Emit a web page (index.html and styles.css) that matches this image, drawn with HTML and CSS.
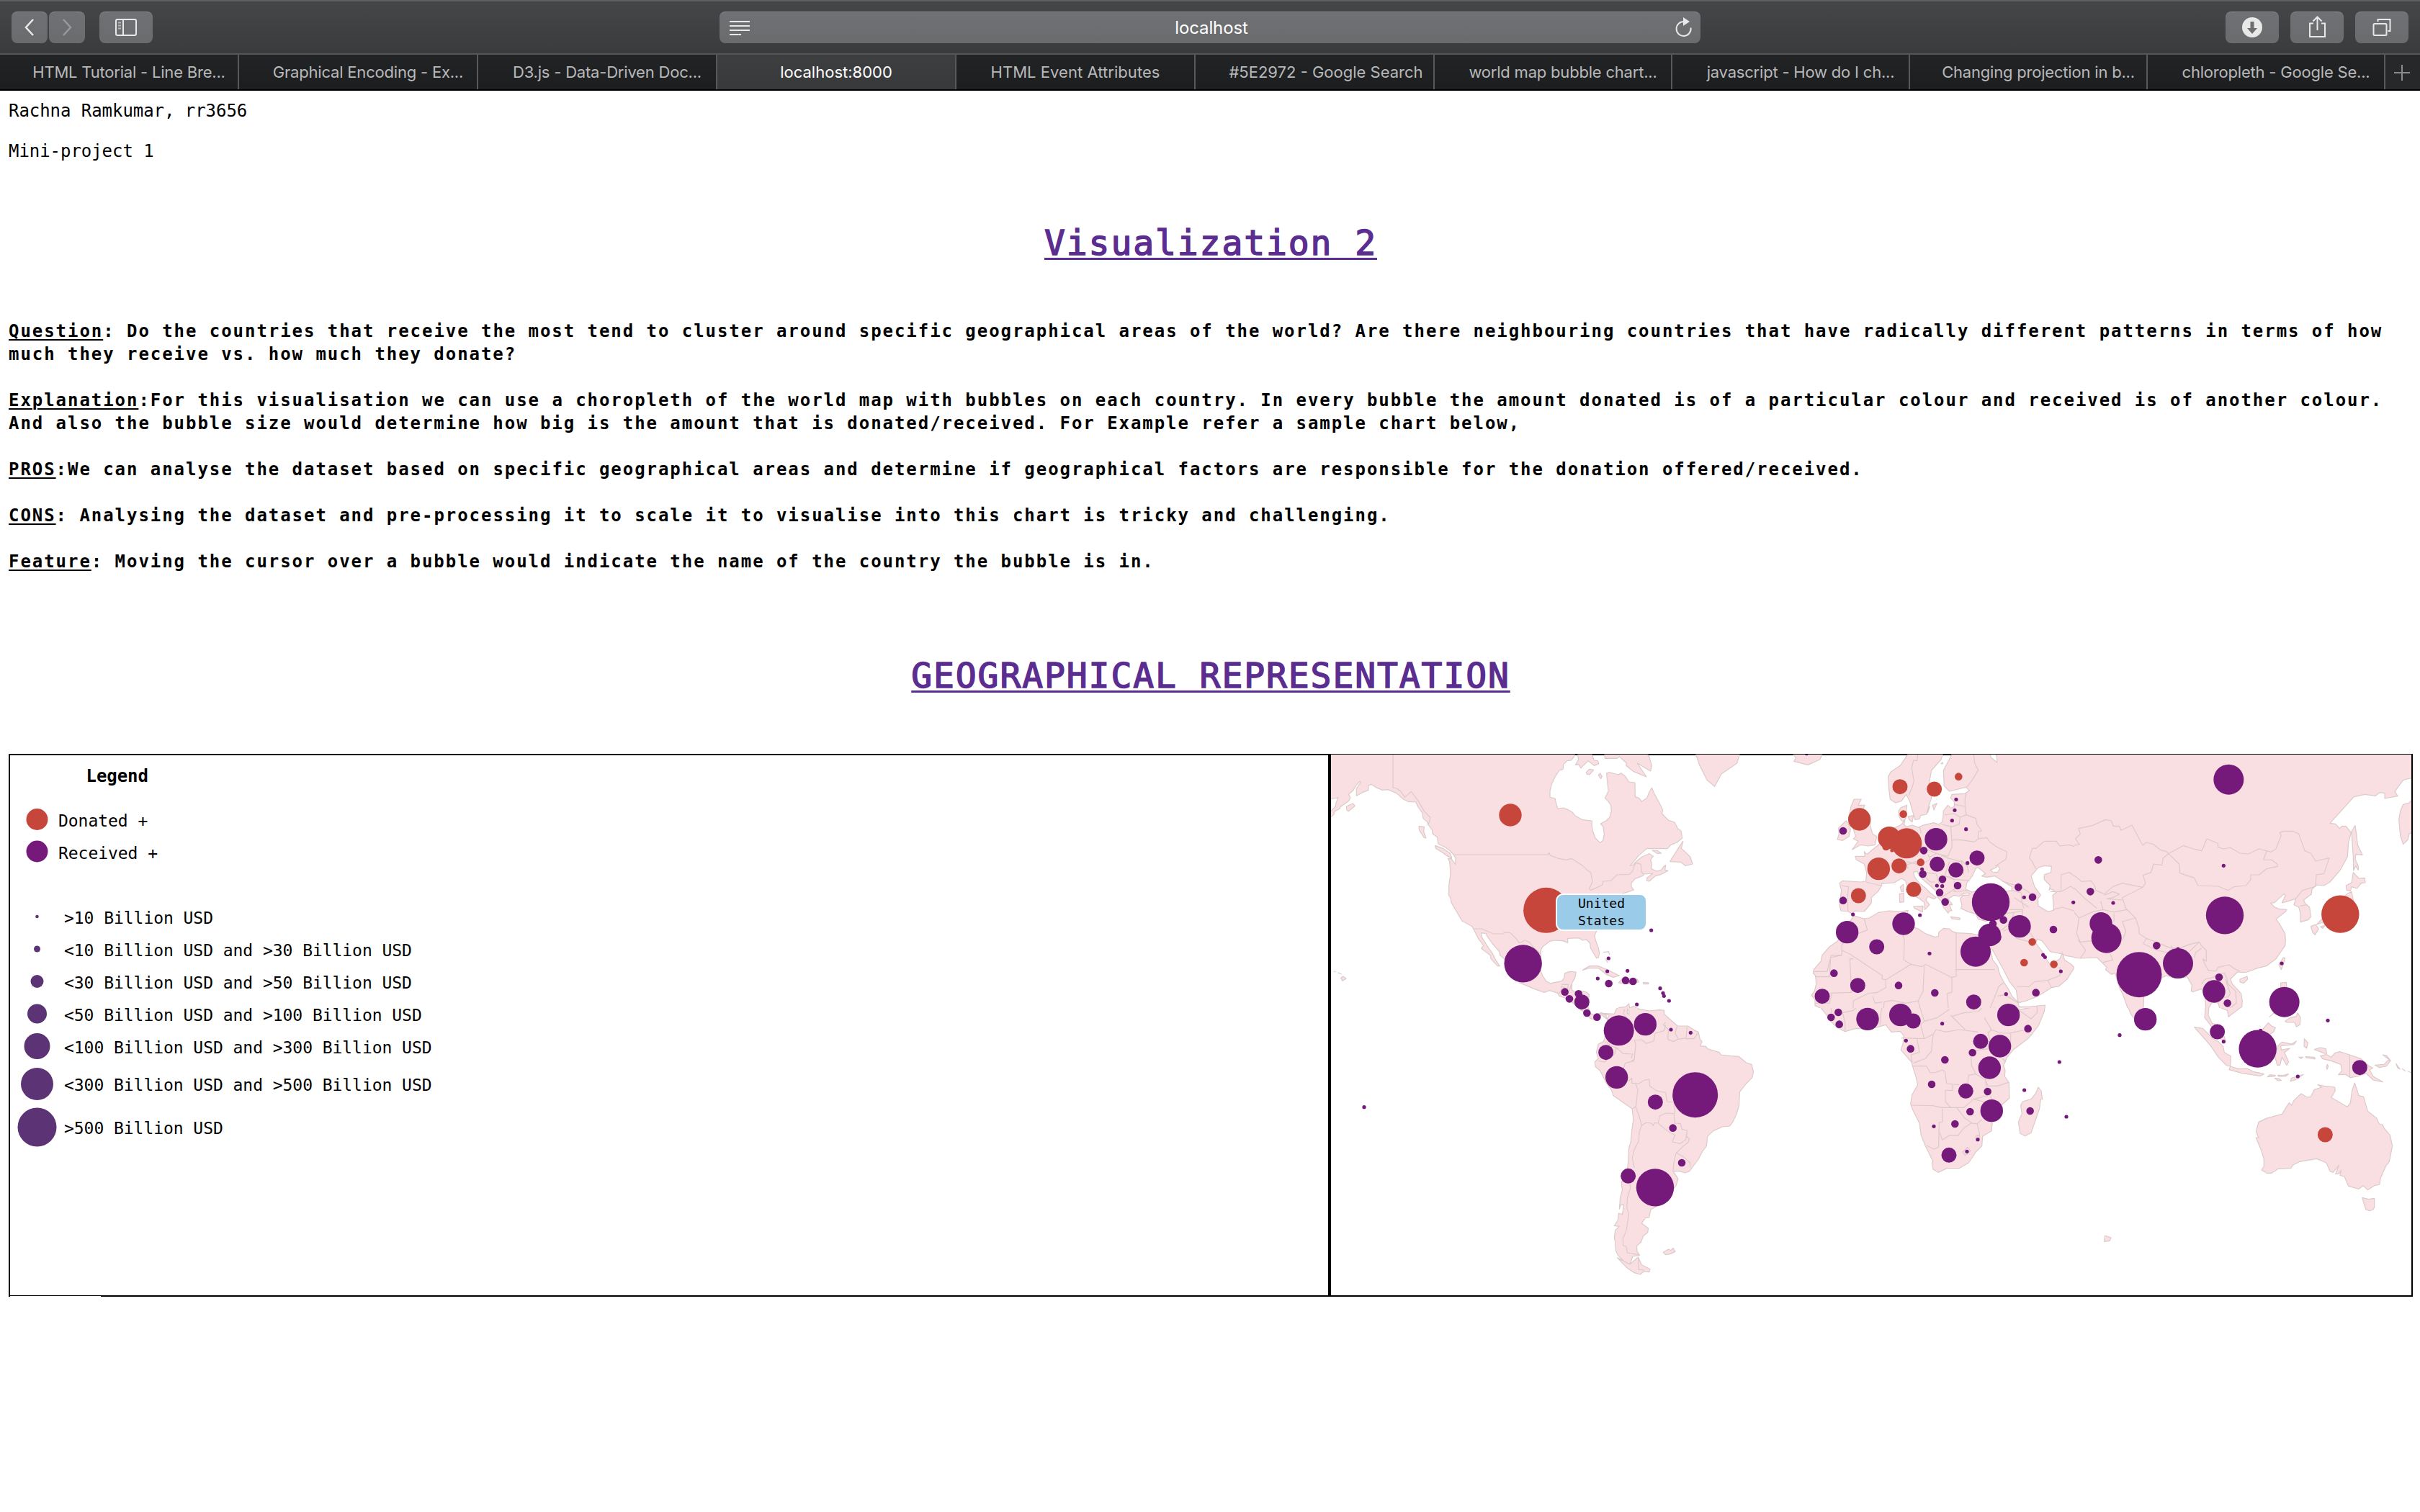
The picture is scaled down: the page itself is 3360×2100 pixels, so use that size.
FILE: index.html
```html
<!DOCTYPE html>
<html lang="en">
<head>
<meta charset="utf-8">
<title>localhost:8000</title>
<link rel="stylesheet" href="styles.css">
</head>
<body>
<header class="browser">
  <div class="toolbar">
    <div class="tools">
      <div class="pair">
        <button class="btn nav"><svg width="50" height="44" viewBox="0 0 50 44"><path d="M30 11 20 22l10 11" class="ico thick"/></svg></button>
        <button class="btn nav"><svg width="50" height="44" viewBox="0 0 50 44"><path d="M20 11 30 22 20 33" class="ico thick dim"/></svg></button>
      </div>
      <button class="btn side"><svg width="74" height="44" viewBox="0 0 74 44"><rect x="23" y="11" width="28" height="22" rx="2" class="ico"/><path d="M33 11v22" class="ico"/><path d="M26 15.5h4M26 19.500h4M26 23.500h4" class="ico dim2"/></svg></button>
    </div>
    <div class="url">
      <svg width="30" height="44" viewBox="0 0 30 44"><path d="M0 13h28M0 19h28M0 25h28M0 31h16" class="ico"/></svg>
      <span>localhost</span>
      <svg width="26" height="44" viewBox="0 0 26 44"><path d="M22.500 21.500a10 10 0 1 1-9.500-8.500" class="ico"/><path d="M12 7l9 6-9 6z" class="solid"/></svg>
    </div>
    <div class="tools right">
      <button class="btn side"><svg width="74" height="44" viewBox="0 0 74 44"><circle cx="37" cy="22" r="14" class="solid"/><path d="M34.500 14h5v9h4.500L37 31l-7-8h4.500z" class="cut"/></svg></button>
      <button class="btn side"><svg width="74" height="44" viewBox="0 0 74 44"><path d="M32 16.500h-5v18.500h21V16.500h-5" class="ico"/><path d="M37.500 26V8M31.500 13.500l6-6 6 6" class="ico"/></svg></button>
      <button class="btn side"><svg width="74" height="44" viewBox="0 0 74 44"><rect x="25.500" y="17" width="18" height="16" rx="1.500" class="ico"/><path d="M31.500 14v-3h17v16h-3" class="ico"/></svg></button>
    </div>
  </div>
  <nav class="tabs">
    <div class="tab"><span>HTML Tutorial - Line Bre...</span></div>
    <div class="tab"><span>Graphical Encoding - Ex...</span></div>
    <div class="tab"><span>D3.js - Data-Driven Doc...</span></div>
    <div class="tab active"><span>localhost:8000</span></div>
    <div class="tab short"><span>HTML Event Attributes</span></div>
    <div class="tab loose"><span>#5E2972 - Google Search</span></div>
    <div class="tab narrow"><span>world map bubble chart...</span></div>
    <div class="tab narrow"><span>javascript - How do I ch...</span></div>
    <div class="tab narrow"><span>Changing projection in b...</span></div>
    <div class="tab narrow"><span>chloropleth - Google Se...</span></div>
    <div class="add"><svg width="24" height="24" viewBox="0 0 24 24"><path d="M12 1v22M1 12h22"/></svg></div>
  </nav>
</header>

<main class="page">
  <p class="line">Rachna Ramkumar, rr3656</p>
  <p class="line">Mini-project 1</p>
  <h1 class="title">Visualization 2</h1>
  <div class="notes">
    <p><u>Question</u>: Do the countries that receive the most tend to cluster around specific geographical areas of the world? Are there neighbouring countries that have radically different patterns in terms of how<br>much they receive vs. how much they donate?</p>
    <p><u>Explanation</u>:For this visualisation we can use a choropleth of the world map with bubbles on each country. In every bubble the amount donated is of a particular colour and received is of another colour.<br>And also the bubble size would determine how big is the amount that is donated/received. For Example refer a sample chart below,</p>
    <p><u>PROS</u>:We can analyse the dataset based on specific geographical areas and determine if geographical factors are responsible for the donation offered/received.</p>
    <p><u>CONS</u>: Analysing the dataset and pre-processing it to scale it to visualise into this chart is tricky and challenging.</p>
    <p><u>Feature</u>: Moving the cursor over a bubble would indicate the name of the country the bubble is in.</p>
  </div>
  <h2 class="title">GEOGRAPHICAL REPRESENTATION</h2>

  <div class="charts">
    <section class="legend">
      <svg width="700" height="749" viewBox="14 1049 700 749">
        <text x="119.500" y="1086" class="head">Legend</text>
        <circle cx="51.500" cy="1138" r="15" class="donated"/><text x="81" y="1148">Donated +</text>
        <circle cx="51.500" cy="1182.500" r="15" class="received"/><text x="81" y="1193">Received +</text>
        <g class="size">
          <circle cx="51.500" cy="1273" r="2.300"/><circle cx="51.500" cy="1318" r="4.500"/><circle cx="51.500" cy="1363" r="9"/><circle cx="51.500" cy="1408" r="13.500"/><circle cx="51.500" cy="1453" r="18"/><circle cx="51.500" cy="1505.500" r="22.500"/><circle cx="51.500" cy="1565.500" r="27"/>
        </g>
        <text x="89" y="1283">&gt;10 Billion USD</text>
        <text x="89" y="1328">&lt;10 Billion USD and &gt;30 Billion USD</text>
        <text x="89" y="1373">&lt;30 Billion USD and &gt;50 Billion USD</text>
        <text x="89" y="1418">&lt;50 Billion USD and &gt;100 Billion USD</text>
        <text x="89" y="1463">&lt;100 Billion USD and &gt;300 Billion USD</text>
        <text x="89" y="1515">&lt;300 Billion USD and &gt;500 Billion USD</text>
        <text x="89" y="1575">&gt;500 Billion USD</text>
      </svg>
    </section>
    <section class="map">
      <svg class="world" width="1500" height="751" viewBox="1848 1048 1500 751">
        <!-- North America -->
        <svg x="1840" y="1030" width="640" height="370" viewBox="0 0 1920 1110">
          <path class="land" d="M0 40 1045 40 1040 56 1025 78 1008 80 992 95 990 115 975 120 958 145 942 180 936 205 936 232 957 237 963 262 969 280 990 276 1012 284 1030 295 1040 308 1072 326 1111 330 1110 350 1115 375 1125 402 1145 422 1157 412 1162 385 1158 355 1147 342 1170 330 1185 315 1192 290 1190 265 1178 248 1165 235 1180 206 1175 170 1172 132 1182 128 1222 138 1232 131 1250 145 1265 168 1290 171 1291 230 1307 235 1318 250 1340 235 1350 210 1360 193 1372 220 1395 262 1406 285 1402 300 1430 328 1455 336 1468 362 1482 372 1487 402 1465 420 1440 430 1425 446 1340 445 1305 475 1285 500 1270 517 1280 515 1297 498 1320 480 1350 467 1366 478 1355 492 1360 510 1358 530 1380 540 1400 535 1410 520 1418 515 1415 535 1428 538 1400 553 1375 560 1350 582 1340 580 1340 568 1365 549 1327 552 1325 558 1290 572 1275 590 1275 605 1285 618 1262 626 1235 634 1200 660 1190 700 1160 760 1130 790 1122 808 1125 825 1138 860 1142 880 1138 900 1130 902 1118 882 1105 860 1103 840 1088 825 1072 828 1058 818 1010 820 1010 838 990 830 955 828 935 832 905 855 898 870 898 910 895 950 905 975 920 998 938 1007 958 1003 985 998 995 985 998 965 1020 958 1045 960 1040 985 1028 1005 1027 1035 1040 1042 1065 1038 1090 1045 1100 1055 1095 1080 1095 1130 1060 1130 1055 1105 1000 1068 975 1060 968 1048 935 1037 912 1045 870 1030 810 1005 780 970 760 920 745 905 728 890 725 875 695 840 675 812 670 800 650 797 652 815 680 860 695 880 710 910 727 935 718 935 690 905 688 890 650 862 660 850 640 825 617 780 612 770 570 747 545 705 525 670 522 652 515 640 515 600 522 550 518 500 512 487 525 488 543 512 543 485 535 472 520 455 500 440 470 425 467 398 448 385 445 368 428 345 425 335 408 320 405 298 385 270 378 252 345 250 325 240 297 215 262 200 238 202 210 190 192 178 180 184 180 202 155 212 130 226 130 195 148 170 145 165 130 180 115 205 97 220 105 235 95 250 65 270 60 280 40 290 35 305 0 335Z
            M457 433 490 445 520 465 527 485 505 475 485 460 460 445ZM390 353 412 355 410 375 420 402 412 400 392 370ZM88 270 115 258 124 268 97 290 90 285Z
            M1050 40 1055 75 1042 97 1055 95 1065 110 1095 80 1120 100 1140 92 1135 80 1120 78 1105 40ZM1087 128 1100 115 1118 118 1100 138 1090 136ZM1138 140 1145 132 1153 145 1148 155ZM1162 40 1165 70 1215 70 1225 62 1255 90 1253 100 1285 125 1338 147 1300 90 1355 123 1360 100 1350 65 1335 40Z
            M1436 500 1470 445 1490 415 1483 445 1500 460 1520 480 1530 510 1500 517 1480 502ZM1539 40 1560 100 1590 160 1622 187 1650 135 1715 90 1730 40Z
            M1362 453 1385 455 1400 465 1385 467ZM1072 952 1100 935 1135 935 1175 950 1225 975 1200 982 1170 970 1140 945 1100 943ZM1240 985 1300 990 1305 1002 1270 1010 1222 1005ZM1325 1003 1348 1005 1345 1010 1325 1010ZM65 985 75 978 87 988 72 997Z
            M1140 1150 1200 1125 1225 1108 1252 1105 1265 1092 1268 1110 1285 1102 1310 1118 1410 1115 1410 1150Z"/>
          <path class="sea" d="M0 250 24 240 53 233 45 255 43 270 24 290 0 300Z"/>
          <path class="border" d="M282 54V192L298 195 315 208 332 232 358 208 388 248 412 290 437 315 435 330 428 345M535 471H928L932 462 937 474 972 487 1005 493 1025 487 1070 515 1088 533 1107 547 1113 585 1100 612 1105 620 1155 597 1157 582 1190 580 1215 555 1265 553 1280 540 1290 510 1297 505 1315 512 1317 543 1327 552M617 780 652 780 700 801H743L745 795 770 796 795 820 805 835 815 838 830 828 850 835 865 855 898 885M972 1050 985 1035 983 1020 1010 1030 1012 1012H985M1027 1010 1015 1040M1158 878 1180 875 1185 888M1168 905 1176 922M35 957 45 960M52 962 68 970"/>
        </svg>
        <!-- South America -->
        <svg x="1840" y="1400" width="640" height="400" viewBox="0 0 1543.900 1200" preserveAspectRatio="none">
          <path class="land" d="M945 50 940 30 925 22 968 25 975 5 990 -15 1045 -15 1050 5 1085 12 1120 8 1135 10 1135 25 1150 42 1180 75 1215 75 1240 95 1250 100 1255 130 1262 140 1255 158 1275 160 1280 170 1320 185 1325 195 1360 200 1385 202 1410 228 1428 235 1434 265 1430 290 1410 315 1388 350 1386 405 1378 440 1365 475 1355 492 1330 495 1300 512 1280 535 1277 575 1262 600 1250 630 1232 660 1220 680 1205 687 1185 680 1165 680 1182 712 1175 740 1150 780 1120 820 1090 840 1085 873 1072 875 1060 897 1082 918 1080 935 1065 950 1058 975 1043 992 1045 1015 1053 1030 1030 1035 1020 1068 1000 1055 980 1030 973 1010 972 980 968 955 972 925 985 910 968 907 980 885 983 855 995 860 1000 820 990 820 985 838 988 790 995 760 992 725 1010 690 1015 640 1017 585 1023 560 1028 500 1032 465 1028 420 1005 400 965 365 958 340 940 310 920 260 905 245 903 225 915 210 908 185 915 150 932 140 938 120 945 90Z
            M978 1040 1020 1068 1048 1038 1060 1070 1088 1088 1085 1100 1067 1098 1055 1110 1035 1103 1010 1082ZM1132 1018 1150 1005 1158 1010 1165 1000 1172 1015 1155 1025 1140 1028ZM845 -20 850 3 870 20 890 45 910 52 925 28 945 48 950 30 925 20 900 30 885 20 880 -20Z"/>
          <path class="sea" d="M1012 5 1018 15 1016 27 1011 22Z"/>
          <path class="border" d="M1003 5 998 25 1010 40M1035 135 1040 150 1035 215 1025 220M975 165 998 190 1030 192 1025 210M1035 220 1005 230 998 255M1013 305 1027 293V313L1050 315 1070 300 1085 297 1087 325 1110 345 1140 352 1145 390 1168 393 1172 430 1168 440 1170 480 1190 482 1195 505 1212 510 1210 535 1220 545 1215 560 1195 580 1175 605 1168 640 1165 680M1175 603 1200 620 1222 645V665M1040 315 1047 340 1043 385 1040 415 1050 445 1060 490 1052 515 1050 555 1035 590 1028 625 1035 665M1020 730 1022 750 1012 790 1010 830 1017 860 1008 930 997 960 998 990 1008 993 1012 1020 1050 1028M1028 420 1040 410M1060 490 1075 478 1093 480 1098 490 1103 478 1115 480 1120 450 1140 438 1168 440M1115 480 1145 512 1172 530 1162 558 1190 565 1208 548 1212 510M938 140 960 160 975 165 970 190 935 225 915 220M1035 135 1060 132 1075 148 1100 138 1105 105 1135 95 1140 70M1140 60 1132 70 1150 90 1147 130 1165 140 1182 130 1172 105 1178 78M1182 130 1208 125 1212 80M1208 128 1235 128 1248 105M1048 1040 1050 1090 1070 1092"/>
        </svg>
        <!-- Europe, North Africa and the Middle East -->
        <svg x="2480" y="1030" width="400" height="370" viewBox="0 0 1200 1110">
          <path class="land" d="M515 40 475 100 437 125 425 145 427 190 433 240 455 255 480 248 500 220 515 250 525 285 537 325 555 322 560 308 585 303 590 280 605 235 600 200 597 165 605 120 645 75 657 40ZM15 40 42 68 32 82 90 97 140 75 157 40Z
            M697 40 655 120 658 185 680 207 748 190 763 203 745 217 690 220 685 235 700 250 700 270 688 278 673 265 655 290 653 320 650 335 635 345 615 338 565 350 552 358 525 348 500 355 490 345 495 330 480 330 470 310 468 290 478 275 503 265 500 290 498 320 480 345 470 350 430 370 385 430 372 440 335 470 325 458 328 478 288 478 292 492 325 510 335 545 332 582 310 585 235 580 222 590 230 620 222 680 228 705 258 708 275 718 285 705 325 708 355 672 355 650 382 625 398 600 397 592 450 588 480 570 497 580 505 605 530 640 555 655 575 670 578 700 597 680 582 660 590 645 615 655 625 650 600 630 580 610 555 590 535 565 530 545 545 540 555 560 575 580 600 600 625 625 632 650 650 670 655 690 675 715 680 705 690 705 680 680 692 680 675 655 700 640 720 645 735 635 755 630 765 632 760 640 735 640 725 655 732 680 728 695 760 710 790 718 800 740 830 748 870 740 860 770 840 800 795 805 770 800 710 797 690 790 680 780 655 778 635 795 635 810 620 815 580 800 550 780 520 770 490 745 515 730 505 712 508 703 480 708 430 705 385 712 345 735 325 738 280 725 270 745 240 765 215 830 180 855 150 890 145 915 115 950 112 965 122 975 125 1010 118 1040 105 1057 120 1075 120 1100 145 1112 145 1150 1075 1150 1078 1098 1010 1105 970 1105 965 1085 940 1060 925 1030 905 1000 890 970 880 935 860 910 850 860 855 860 880 905 905 950 930 1000 958 1035 965 1080 970 1088 1000 1080 1050 1060 1105 1025 1135 1020 1170 990 1200 942 1190 930 1160 910 1150 880 1140 905 1100 930 1085 910 1070 880 1040 840 1045 822 1065 830 1085 855 1100 875 1150 885 1165 892 1225 902 1260 900 1260 40Z
            M283 240 313 240 300 265 327 265 320 285 350 320 350 350 360 385 377 395 370 430 340 435 310 430 275 450 300 415 280 405 290 395 275 350 260 320 270 270ZM250 330 258 340 268 365 262 395 235 412 213 408 220 385 218 360ZM475 605 488 595 488 625 480 625ZM472 635 490 630 490 668 473 670ZM685 730 725 735 722 742 690 738ZM530 687 570 685 568 710 535 695ZM610 265 628 257 615 285ZM590 295 595 272 598 272ZM508 312 530 308 525 335 512 325ZM645 92 651 86 652 93Z"/>
          <path class="sea" d="M748 615 752 590 775 560 790 528 800 525 830 550 815 560 835 565 870 560 900 580 940 605 940 620 900 625 870 605 800 620 775 627ZM850 535 875 525 880 515 890 530 880 545 860 543ZM1020 560 1050 525 1075 517 1105 520 1103 545 1075 555 1075 575 1100 600 1095 620 1100 612 1125 628 1110 640 1115 703 1090 708 1050 685 1048 655 1060 640 1035 605ZM850 40 852 65 878 87 878 65 868 40Z"/>
          <path class="border" d="M550 40 545 80 530 78 523 110 532 165 525 190 510 225M780 40 785 90 800 118 775 160 752 190M748 215 745 240 745 270 700 262M745 270 750 305 725 315 700 300 660 305M750 305 790 320 795 345 815 372 800 375 800 405 835 400 850 420 880 440 920 460 915 490 885 510 870 520M725 315 720 345 690 355 650 345M690 410 730 410 785 418 800 405M685 350 690 410 690 440 672 480M570 440 610 460 640 470 672 478M555 355 562 380M1260 352 1220 362 1215 405 1225 430 1200 437 1180 430 1140 435 1125 415 1075 415 1040 445 1025 445 1013 485 1025 500 1040 530M1145 625V555L1180 545 1220 575 1260 580M1100 625 1145 625 1185 603 1215 625 1260 650M1110 700 1150 690 1215 710 1218 750 1215 830 1250 900M1220 750 1260 735M1225 835 1260 832M930 700 985 700 985 730 1010 790 1040 830M900 720 985 705M900 582 960 600 1000 620 1040 650M940 620 980 630 980 660 990 695M950 650 1010 690M905 790 925 780 960 820 1030 838M890 790 930 760 950 710M960 1020 1010 1022 1035 1000 1090 995 1140 975 1140 940M1090 995 1105 1025M332 585 395 600M230 600 260 605 255 650 258 708M500 500 560 515 600 490 590 470M600 480 630 465 670 485 730 500 740 555M660 560 700 575 760 578M580 545 625 552 640 600M575 560 600 585 620 585M700 580 700 625 760 620M645 650 700 615M680 500 660 560 700 570M540 500 500 515 510 530M730 495 755 520 760 545M325 738 338 785 300 800 232 845V890H188L170 958H112M232 870 265 885 400 975V990L415 992 520 928 490 910 492 830 485 800 505 735M265 905 272 1045 185 1048M265 905H280M708 795V948M708 950H870M520 928 565 938 580 928 690 983V1045M708 948V978L690 983M575 935 570 1040 550 1080M415 992V1025L380 1045 340 1050 280 1080 278 1120M120 980H180L185 900 232 890M690 1045 670 1050 675 1110M850 1110 870 1060 885 1020 905 1005M880 1060 910 1055 968 1090M405 1130 408 1085 440 1078 500 1090 550 1080 560 1120M360 1060 370 1090 400 1085M120 1090 180 1090 190 1050M800 1120 870 1110M1045 1130 1045 1105"/>
        </svg>
        <!-- Southern Africa -->
        <svg x="2480" y="1400" width="400" height="400" viewBox="0 60 1200 1200">
          <path class="land" d="M105 8 118 25 120 50 145 60 165 85 185 115 210 140 245 158 290 145 350 148 415 130 438 160 475 157 490 175 487 205 478 235 522 285 527 305 540 345 548 380 525 420 518 460 525 480 555 540 562 590 580 635 612 700 607 705 612 732 633 745 670 728 720 728 760 705 790 660 815 635 818 595 855 572 858 540 850 480 900 462 930 435 928 370 910 345 912 320 905 300 920 265 945 235 1010 185 1050 135 1075 75 1078 47 970 67 967 40 940 15 925 -20 105 -20ZM1050 390 1062 405 1067 440 1060 440 1055 480 1020 580 995 593 975 583 967 535 982 500 977 465 985 450 1020 440 1040 415Z"/>
          <path class="border" d="M527 302H585L600 330 625 328 650 318 662 325 668 375 720 380M668 375 693 377V403H663V450L685 475M520 465 610 467 650 475 700 475 740 475 780 440 840 425M650 480V535L637 537 635 640 615 648 585 633M640 580 650 610 680 590 715 592 740 560 770 540 795 542 805 580V600M710 475 745 520 775 540M795 542 815 525M530 290 580 270 605 240 612 170 625 150 665 160 720 150 800 160M770 260 772 300 790 335 760 340 755 378M790 335 830 360 840 385 880 385 925 370M770 240 840 230M840 160 850 200M850 150 900 165 930 165 1000 150M935 165V200M900 270 915 285M1045 55V80L1020 105 970 70M480 185 575 188 610 170M575 188 560 130 575 115 555 50M685 90 745 150M575 115 630 100 680 65M690 95 740 80 800 75 830 45M825 100 855 150 840 165M390 130 395 80 405 30M245 155 245 120 235 80 280 70 300 50M145 60 185 50 190 80M735 660 755 640 768 655 745 675ZM782 440 820 450 840 480M850 425 860 445M830 360 838 425M545 190 555 245 520 255 525 290M790 600a8 10 0 1 0 16 0a8 10 0 1 0-16 0"/>
        </svg>
        <!-- Asia -->
        <svg x="2880" y="1030" width="470" height="370" viewBox="0 0 1410 1110">
          <path class="land" d="M-20 40H1430V145L1405 152 1370 160 1335 208 1347 227 1293 237 1293 215 1272 212 1255 226 1210 220 1165 230 1065 340 1088 343 1105 362 1115 352 1132 353 1153 380 1142 420 1138 480 1108 535 1065 585 1040 600 1010 597 990 615 988 635 955 660 962 675 980 690 985 730 975 742 942 752 942 715 935 690 915 680 922 655 880 668 865 672 880 640 873 635 835 670 818 673 835 690 852 697 885 700 880 708 840 740 855 760 878 800 880 830 878 850 840 905 800 935 765 943 720 960 705 962 680 960 650 990 658 1010 695 1050 700 1080 698 1105 640 1145 635 1125 605 1110 600 1090 575 1085 560 1110 560 1150 545 1150 548 1110 545 1060 530 1030 495 1042 487 1040 490 1015 470 980 420 985 385 975 350 990 290 1060 288 1110 270 1140 245 1150 235 1140 215 1090 205 1060 190 1030 170 965 155 970 130 950 135 940 95 900 25 903 -20 898Z
            M1170 350 1175 385 1180 430 1200 472 1172 470 1170 490 1183 520 1183 535 1172 518 1163 537 1162 480 1155 375ZM1162 545 1185 570 1210 568 1212 588 1195 590 1178 612 1155 605 1150 622 1135 620 1132 600 1155 588ZM1135 635 1155 625 1162 660 1160 740 1100 790 1045 750 1010 762 1035 735 1080 700ZM985 770 1005 762 1018 780 1003 805 993 795ZM1025 772 1045 765 1035 778ZM1430 225 1410 238 1395 255 1370 262 1358 290 1352 325 1358 390 1370 428 1390 408 1395 383 1430 380ZM870 900 878 902 870 930 862 950 852 930ZM690 990 720 978 722 990 705 1007 690 1002ZM860 1005 883 1003 885 1030 860 1050Z"/>
          <path class="border" d="M-10 432 22 430 5 405 25 385 18 362 75 350 130 325 155 330 162 352 188 352 195 370 240 348 285 432 300 420 330 428 360 452 385 458 392 467 370 485 365 515 330 510 320 545 287 557 297 590 285 607 200 590 160 605 125 635 90 620 85 600 70 580 30 583 -10 550M392 467 455 433 495 447 530 455 540 435 552 405 597 423 600 440 620 447 650 442 690 465 725 468 770 447 820 460 840 447 862 390 855 380 870 373 910 373 935 385 960 455 985 465 1005 498 1062 485 1040 550 1008 555 1005 605M392 467 437 510 440 548 500 568 515 600 600 603 640 620 665 605 715 600 735 575V555L770 555 800 530 847 520 845 510 822 493 788 492 802 455M285 607 240 630 200 650 215 695M125 640 160 625 188 635 160 650 135 655 200 660M110 665 120 700M-10 600 40 650 95 695M215 695 255 735 270 780V800L300 820 340 835 400 860 440 860 480 845 520 835 530 850 550 870V915L535 905 545 930 560 955 590 955M300 820 288 842 345 870 400 880M590 955 600 940 645 930 665 945 690 957M595 970 625 965 635 985 640 1010 672 1040 675 1090 650 1110M530 1010 545 990 570 985 600 970M630 990 650 1050 640 1065 620 1065M-10 700 20 735 75 710 120 700 165 710 220 700M20 735 10 800 25 835 75 830M25 903 48 870 15 825M120 920 160 910 150 885M200 830 215 790 200 750 255 735M165 715 165 750M940 685 970 680M922 655 950 620 1000 605M530 860 505 880 500 900M405 850 415 885M520 835 500 855 480 875"/>
        </svg>
        <!-- South-east Asia and Oceania -->
        <svg x="2880" y="1400" width="470" height="400" viewBox="0 0 1410 1200">
          <path class="land" d="M218 -20 235 25 250 45 285 30 288 -20ZM548 -20 562 -20 558 30 575 65 600 70 625 120 630 140 610 130 570 75 543 40ZM600 -20 612 0 638 10 642 37 690 0 700 -20ZM500 80 535 85 580 130 600 140 620 160 625 185 652 200 650 243 635 240 600 205 570 160 553 140ZM650 243 680 253 720 252 745 265 790 275 775 283 700 272 645 257ZM805 287 815 278 838 281 835 285ZM848 280 870 281 892 275 880 285 850 285ZM835 293 855 295 862 302 850 303ZM900 305 905 292 955 277 920 300ZM785 88 808 62 822 75 838 82 830 100 800 120ZM850 155 865 142 905 150 925 138 915 152 860 157 862 175 898 168 875 185 893 225 885 238 865 205 857 238 845 238 835 200ZM958 128 973 145 968 168 957 160ZM935 205 952 205 945 211ZM963 203 1000 205 1003 213 965 207ZM1050 245 1054 235 1058 243 1053 256ZM1000 173 1025 165 1048 170 1052 195 1070 205 1085 188 1105 182 1147 195 1195 212 1225 240 1243 250 1230 258 1245 285 1285 308 1245 300 1215 272 1180 285 1150 290 1130 277 1100 278 1115 262 1110 235 1070 220 1035 212 1025 200 1045 195 1040 188ZM1252 238 1290 235 1310 215 1315 222 1300 242 1270 248ZM1285 195 1300 198 1318 220ZM1340 232 1357 255 1347 250ZM1365 253 1380 263M1390 263 1415 275M812 38 832 20M878 55 900 40 925 35 930 20 942 40 940 70 925 78 918 60 885 60Z
            M1168 312 1185 365 1205 370 1222 430 1260 460 1270 483 1285 487 1290 500 1315 530 1325 575 1312 640 1298 658 1275 710 1272 735 1250 740 1222 758 1203 740 1185 754 1142 742 1125 702 1107 697 1112 675 1103 690 1088 692 1103 655 1078 685 1065 680 1050 645 1010 628 940 640 910 655 902 668 850 670 822 688 802 688 780 675 790 660 790 630 778 590 765 560 757 540 768 540 757 515 768 475 800 460 865 442 895 395 905 405 915 385 945 357 970 372 985 370 1000 340 1030 330 1015 320 1040 325 1085 330 1087 345 1070 373 1137 412 1150 395 1157 345ZM1200 790 1225 797 1250 793 1250 830 1245 840 1230 845 1215 840 1205 810ZM128 948 153 957 148 970 125 973Z"/>
          <path class="border" d="M1147 195V288"/>
        </svg>
        <g id="bubbles"></g>
      </svg>
      <div class="tooltip">United<br>States</div>
    </section>
  </div>
</main>
<script src="bubbles.js"></script>
</body>
</html>
```
FILE: bubbles.js
```js
// Bubbles grouped by region: origin of the region, then [x, y, size step] per country.
const steps = { 1: 2.6, 2: 5.3, 3: 10.5, 4: 15.7, 5: 21, 6: 26.2, 7: 31.5 };
const regions = [
  { x: 1840, y: 1030,
    donated: [[771,306,4],[920,703,7]],
    received: [[824,925,6],[1358,786,1],[1180,903,1],[1175,957,1],[1135,987,1],[1259,955,1],[1181,1008,2],[1251,995,2],[1282,999,2],[1395,1028,1],[1407,1048,1],[1411,1060,1],[1432,1080,1],[1298,1095,1],[998,1043,2],[1055,1051,2],[1017,1072,2],[1069,1085,3],[1090,1131,2],[1132,1148,2],[1223,1204,5],[1333,1178,4],[1440,1200,1],[1522,1213,1],[1169,1295,3],[1214,1399,4],[1541,1472,7],[1375,1502,3],[1448,1610,2],[1485,1755,2],[1262,1810,3],[1374,1858,6],[162,1523,1]] },
  { x: 2480, y: 1030,
    donated: [[474,188,3],[617,198,3],[718,146,2],[305,324,4],[488,302,2],[429,401,4],[502,424,5],[416,438,2],[441,453,1],[385,530,4],[470,518,3],[560,503,2],[531,616,3],[301,642,3],[1025,835,2],[991,921,2],[1115,928,2]],
    received: [[85,50,1],[708,241,1],[702,286,1],[691,329,1],[749,365,1],[237,372,2],[624,407,4],[573,454,2],[795,485,3],[755,506,1],[629,511,3],[707,535,3],[566,532,1],[569,552,2],[651,574,2],[628,600,1],[650,602,1],[714,600,2],[639,629,2],[662,668,2],[237,662,2],[278,720,1],[557,723,1],[852,669,6],[967,607,2],[991,649,1],[1026,648,2],[1196,670,1],[905,743,2],[861,759,2],[847,806,4],[865,814,3],[789,875,5],[972,770,4],[1113,783,2],[254,794,4],[489,759,4],[377,855,3],[597,883,1],[1070,889,1],[1078,898,1],[1144,957,1],[199,965,2],[298,1016,3],[468,1016,2],[619,1047,2],[150,1061,3],[781,1085,3],[916,1052,1],[1040,1046,2],[926,1139,4],[476,1139,4],[529,1164,3],[339,1156,4],[217,1128,2],[187,1149,2],[221,1178,2],[650,1175,1],[1007,1196,2]] },
  { x: 2480, y: 1380, donated: [],
    received: [[499,196,1],[518,230,2],[661,276,2],[810,199,3],[890,219,4],[776,246,2],[847,309,4],[1138,285,1],[606,378,2],[748,406,3],[839,408,2],[992,402,1],[856,488,4],[766,492,2],[1016,489,2],[1167,513,1],[703,543,2],[615,553,1],[798,608,1],[753,658,1],[678,673,3]] },
  { x: 2880, y: 1030, donated: [[1108,719,6]],
    received: [[643,158,5],[100,493,2],[622,517,1],[67,625,2],[162,672,1],[627,724,6],[111,758,4],[134,818,5],[343,850,2],[270,971,7],[432,924,5],[432,864,1],[603,982,2],[582,1041,4],[638,1090,2],[864,924,1],[875,1085,5],[296,1157,4],[1056,1162,1]] },
  { x: 2880, y: 1400, donated: [[1045,528,3]],
    received: [[189,113,1],[596,99,3],[622,140,1],[764,170,6],[776,94,1],[931,285,1],[1189,248,3]] }
];
const layer = document.getElementById('bubbles');
for (const region of regions) {
  for (const kind of ['donated', 'received']) {
    for (const [x, y, step] of region[kind]) {
      const c = document.createElementNS('http://www.w3.org/2000/svg', 'circle');
      c.setAttribute('cx', region.x + x / 3);
      c.setAttribute('cy', region.y + y / 3);
      c.setAttribute('r', steps[step]);
      c.setAttribute('class', kind);
      layer.appendChild(c);
    }
  }
}
```
FILE: styles.css
```css
* { box-sizing: border-box; }
body { margin: 0; background: #fff; color: #000; font-family: "DejaVu Sans Mono", "Liberation Mono", monospace; width: 3360px; height: 2100px; overflow: hidden; }
p, h1, h2 { margin: 0; }
svg { display: block; }

.browser { font-family: Inter, "Liberation Sans", sans-serif; }
.toolbar { height: 76px; padding: 14px 16px 0; border-top: 2px solid #5d5f62; border-bottom: 2px solid #555658; background: linear-gradient(#454648, #3a3b3d); display: grid; grid-template-columns: 1fr 1362px 1fr; }
.tools { display: flex; gap: 20px; }
.tools.right { justify-content: flex-end; gap: 16px; }
.pair { display: flex; gap: 2px; }
.btn { height: 44px; padding: 0; border: 0; border-top: 1px solid #88898b; border-radius: 8px; background: linear-gradient(#707174, #6a6b6d); }
.btn svg { margin-top: -1px; }
.nav { width: 50px; }
.side { width: 74px; }
.url { height: 44px; padding: 0 10px 0 14px; border-top: 1px solid #88898b; border-radius: 8px; background: linear-gradient(#707174, #6a6b6d); display: flex; justify-content: space-between; align-items: center; color: #fff; font-size: 24px; letter-spacing: -0.1px; }
.url span { margin-left: -4px; }
.ico { fill: none; stroke: #e8e8e8; stroke-width: 2; }
.thick { stroke-width: 2.600; }
.dim { stroke: #97989a; }
.dim2 { stroke: #b5b6b8; }
.solid { fill: #e8e8e8; }
.cut { fill: #6d6e70; }

.tabs { display: flex; height: 50px; background: #272829; border-bottom: 2px solid #000; }
.tab { width: 332px; padding: 0 16px 0 44px; border-right: 2px solid #58595b; background: linear-gradient(#232425, #1c1d1e); color: #b8b9bb; font-size: 22px; line-height: 49px; letter-spacing: -0.2px; text-align: center; white-space: nowrap; }
.tab.narrow { width: 330px; }
.tab.active { padding: 0; letter-spacing: 0; background: linear-gradient(#3d3e40, #38393b); color: #fff; }
.tab.short { padding: 0; letter-spacing: 0.050px; }
.tab.loose { letter-spacing: 0; padding-right: 12px; }
.add { flex: 1; padding: 13px 0 0 11px; }
.add path { stroke: #8a8b8d; stroke-width: 2; }

.page { padding: 12px 10px 0 12px; }
.line { font-size: 24px; line-height: 32px; letter-spacing: -0.05px; }
.line + .line { margin-top: 24px; }
.title { font-size: 48px; font-weight: 400; line-height: 64px; letter-spacing: 1.900px; text-align: center; color: #5b2d90; -webkit-text-stroke: 1.500px #5b2d90; text-decoration: underline 3px; text-underline-offset: 4px; text-decoration-skip-ink: none; }
h1.title { margin-top: 79px; }
h2.title { margin: 110px 0 76px; }
.notes { margin-top: 75px; display: flex; flex-direction: column; gap: 32px; font-size: 24px; font-weight: 700; line-height: 32px; letter-spacing: 1.950px; white-space: nowrap; }
.notes u { text-decoration-thickness: 2px; text-underline-offset: 3px; }

.charts { display: flex; width: 3338px; height: 754px; margin-top: 77px; }
.legend { position: relative; width: 1834px; border: 2px solid #000; }
.legend::after { content: ""; position: absolute; left: 0; bottom: -2px; width: 126px; height: 1px; background: #fff; }
.legend text { font-size: 23px; letter-spacing: -0.050px; }
.legend .head { font-size: 24px; font-weight: 700; }
.donated { fill: #c6463b; }
.received { fill: #75197b; }
.size { fill: #5c3375; }
.map { position: relative; width: 1504px; border: 2px solid #000; }
.world { margin-top: -1px; }
.land { fill: #fadfe2; stroke: #dccaca; stroke-width: 1.200px; stroke-linejoin: round; vector-effect: non-scaling-stroke; }
.sea { fill: #fff; stroke: #dccaca; stroke-width: 1.200px; vector-effect: non-scaling-stroke; }
.border { fill: none; stroke: #dccaca; stroke-width: 1.200px; stroke-linejoin: round; vector-effect: non-scaling-stroke; }
.tooltip { position: absolute; left: 312px; top: 192px; width: 127px; height: 52px; border: 2px solid #fff; border-radius: 10px; background: #9acbe8; font-size: 18px; line-height: 23.500px; text-align: center; }
```
